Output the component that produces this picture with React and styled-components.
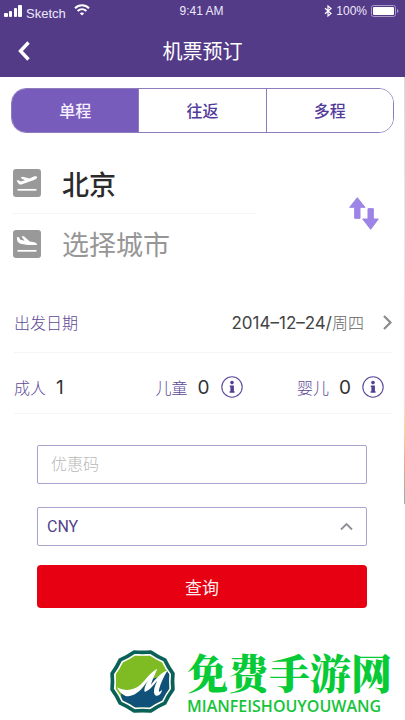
import React, { useState } from 'react';
import styled, { createGlobalStyle } from 'styled-components';

const GlobalStyle = createGlobalStyle`
  * {
    box-sizing: border-box;
  }

  body {
    margin: 0;
    background: #fff;
    color: #333;
    font-family: Inter, "Noto Sans CJK SC", sans-serif;
  }

  button, input, select {
    margin: 0;
    padding: 0;
    border: 0;
    background: none;
    color: inherit;
    font: inherit;
  }

  button {
    cursor: pointer;
  }
`

const Page = styled.div`
  display: flex;
  flex-direction: column;
  min-height: 100vh;
  background: linear-gradient(#b9e2f2 0, #d9eff6 230px, #fbdcdc 300px, #fbdcdc 400px, #f8e08c 430px, #f5a58a 460px, #8fb5a0 504px) right top / 1px 504px no-repeat;
`

const Header = styled.header`
  height: 77px;
  background: #533b88;
  color: #fff;
`

const StatusBar = styled.div`
  display: grid;
  grid-template-columns: 1fr auto 1fr;
  align-items: center;
  height: 22px;
  padding: 0 6px 0 4px;
  color: #eee8fa;
  font-family: "Liberation Sans", Arial, sans-serif;
  font-size: 12px;
`

const StatusGroup = styled.div`
  display: flex;
  align-items: center;
  gap: 4px;
  justify-content: ${props => props.$end ? 'flex-end' : 'flex-start'};
`

const Carrier = styled.span`
  padding: 4px 4px 0 0;
  font-size: 13px;
`

const NavBar = styled.div`
  display: grid;
  grid-template-columns: 48px 1fr 48px;
  align-items: center;
  height: 58px;
`

const BackButton = styled.button`
  display: flex;
  align-items: center;
  justify-content: center;
  height: 44px;
`

const Title = styled.h1`
  margin: 0;
  padding-top: 2px;
  font-size: 20px;
  font-weight: 400;
  line-height: 28px;
  text-align: center;
`

const Tabs = styled.div`
  display: flex;
  height: 45px;
  margin: 11px 11px 0;
  overflow: hidden;
  border: 1px solid #8c7cbd;
  border-radius: 15px;
`

const Tab = styled.button`
  flex: 1;
  padding-bottom: 2px;
  background: ${props => props.$active ? '#785cbb' : '#fff'};
  color: ${props => props.$active ? '#f6efff' : '#523a9c'};
  font-size: 16px;
  font-weight: 500;

  & + & {
    border-left: 1px solid #8c7cbd;
  }
`

const Route = styled.section`
  display: flex;
  align-items: center;
  margin-top: 20px;
  padding: 0 26px 0 12px;
`

const Cities = styled.div`
  flex: 1;
`

const CityButton = styled.button`
  display: flex;
  align-items: center;
  gap: 21px;
  width: 244px;
  height: 60px;
  color: ${props => props.$empty ? '#969696' : '#2b2b2b'};
  font-size: 27px;
  font-weight: ${props => props.$empty ? 400 : 500};
  text-align: left;

  & + & {
    border-top: 1px solid #f5f4f7;
  }
`

const CityIcon = styled.svg`
  width: 28px;
  height: 28px;
  margin-left: 1px;
  border-radius: 3px;
  background: #999;
`

const SwapButton = styled.button`
  display: flex;
`

const Details = styled.section`
  margin: 18px 13px 0 14px;
`

const DateButton = styled.button`
  display: flex;
  align-items: center;
  width: 100%;
  height: 62px;
  padding-top: 1px;
  border-bottom: 1px solid #f5f4f7;
`

const Label = styled.span`
  color: #5d4996;
  font-size: 16px;
  font-weight: 300;
`

const DateText = styled.span`
  margin-left: auto;
  margin-right: 19px;
  color: #444;
  font-size: 17px;
`

const Weekday = styled.span`
  color: #666;
  font-size: 16px;
  font-weight: 300;
`

const Passengers = styled.div`
  display: grid;
  grid-template-columns: 1fr 1fr auto;
  align-items: center;
  height: 61px;
  padding-top: 8px;
  padding-right: 8px;
  border-bottom: 1px solid #f5f4f7;
`

const Passenger = styled.div`
  display: flex;
  align-items: center;
`

const Count = styled.span`
  width: 23px;
  margin-left: 10px;
  font-size: 19px;
`

const InfoButton = styled.button`
  display: flex;
`

const Form = styled.form`
  display: flex;
  flex-direction: column;
  margin: 31px 38px 0 37px;
`

const fieldBox = `
  width: 100%;
  height: 39px;
  border: 1px solid #aaa3cb;
  border-radius: 2px;
`

const CodeInput = styled.input`
  ${fieldBox}
  padding: 0 13px 2px;
  font-size: 16px;

  &::placeholder {
    color: #b8b8b8;
    font-weight: 300;
  }
`

const SelectWrapper = styled.div`
  position: relative;
  margin: 23px 0 19px;
`

const CurrencySelect = styled.select`
  ${fieldBox}
  appearance: none;
  display: block;
  padding: 0 9px;
  color: #54438a;
  font-family: Roboto, sans-serif;
  font-size: 16px;
`

const SelectArrow = styled.svg`
  position: absolute;
  top: 15px;
  right: 14px;
  pointer-events: none;
`

const SubmitButton = styled.button`
  height: 43px;
  border-radius: 4px;
  background: #e60012;
  color: #ffeff0;
  font-size: 17px;
`

const Footer = styled.footer`
  display: flex;
  align-items: center;
  gap: 11px;
  margin-top: auto;
  padding: 0 12px 6px 109px;
`

const Brand = styled.div`
  display: flex;
  flex-direction: column;
  gap: 6px;
  white-space: nowrap;
`

const BrandName = styled.strong`
  color: #06cb36;
  font-family: "Noto Serif CJK SC", "Noto Sans CJK SC", serif;
  font-size: 41px;
  font-weight: 900;
  line-height: 42px;
`

const BrandLatin = styled.span`
  color: #16c43a;
  font-family: "Open Sans", sans-serif;
  font-size: 16px;
  font-weight: 600;
  line-height: 14px;
`

function SignalIcon() {
  return (
    <svg width="18" height="12" viewBox="0 0 18 12" fill="#fff">
      <rect x="0" y="8" width="4" height="4" rx="1" />
      <rect x="5" y="6" width="3" height="6" rx="1" />
      <rect x="10" y="3" width="3" height="9" rx="1" />
      <rect x="14" y="0" width="4" height="12" rx="1" />
    </svg>
  )
}

function WifiIcon() {
  return (
    <svg width="16" height="14" viewBox="0 0 16 14" fill="none" stroke="#fff" strokeWidth="2">
      <path d="M1 4.2C5 0.3 11 0.3 15 4.2" />
      <path d="M3.6 7C6.2 4.6 9.8 4.6 12.4 7" />
      <path d="M8 11.5L5.8 9.2C7 8.1 9 8.1 10.2 9.2Z" fill="#fff" stroke="none" />
    </svg>
  )
}

function BluetoothIcon() {
  return (
    <svg width="8" height="12" viewBox="0 0 8 12" fill="none" stroke="#fff" strokeWidth="1.2">
      <path d="M1 3.3L7 8.6L4 11V1L7 3.4L1 8.7" />
    </svg>
  )
}

function BatteryIcon() {
  return (
    <svg width="28" height="12" viewBox="0 0 28 12">
      <rect x="0.5" y="0.5" width="24" height="11" rx="2" fill="none" stroke="#a99bc9" />
      <rect x="2" y="2" width="21" height="8" rx="1" fill="#fff" />
      <path d="M26 4Q27.5 4.5 27.5 6T26 8Z" fill="#a99bc9" />
    </svg>
  )
}

function TakeoffIcon() {
  return (
    <CityIcon viewBox="0 0 80 80" fill="#fff">
      <path d="M10 33L16 32L22 36L34 32L21 25L28 22L47 27L61 21Q69 19 69 24Q68 28 58 32L24 44Q18 46 15 41Z" />
      <rect x="13" y="57" width="54" height="5" />
    </CityIcon>
  )
}

function LandingIcon() {
  return (
    <CityIcon viewBox="0 0 80 80" fill="#fff">
      <path d="M11 20L17 21L21 28L33 31L24 18L31 18L48 33L61 35Q69 37 69 43H42L21 39Q13 36 12 31Z" />
      <rect x="13" y="57" width="54" height="5" />
    </CityIcon>
  )
}

function InfoIcon() {
  return (
    <svg width="22" height="22" viewBox="0 0 22 22" fill="#523f94">
      <circle cx="11" cy="11" r="10.2" fill="none" stroke="#5c4a99" strokeWidth="1.1" />
      <circle cx="11" cy="6.6" r="1.8" />
      <path d="M8.8 9.4H12.9V15.2H13.6V16.8H8.6V15.2H9.4V10.9H8.8Z" />
    </svg>
  )
}

function SwapIcon() {
  return (
    <svg width="30" height="33" viewBox="0 0 90 99" fill="#9c85e6" stroke="#9c85e6" strokeWidth="3" strokeLinejoin="round">
      <path d="M25 2L48 31H33V64H17V31H2Z" />
      <path d="M65 97L88 66H73V35H57V66H41Z" />
    </svg>
  )
}

// rounded twelve-sided badge, each side slightly pulled in
function badgePath(r) {
  const point = (radius, deg) => {
    const a = deg * Math.PI / 180
    return `${(100 + radius * Math.cos(a)).toFixed(1)} ${(97 + radius * 0.97 * Math.sin(a)).toFixed(1)}`
  }
  let d = `M${point(r, 15)}`
  for (let i = 1; i <= 12; i++) {
    d += `Q${point(r * 0.94, i * 30)} ${point(r, 15 + i * 30)}`
  }
  return d + 'Z'
}

function BrandLogo() {
  return (
    <svg width="67" height="65" viewBox="0 0 200 194" strokeLinejoin="round">
      <clipPath id="badge">
        <path d={badgePath(83)} />
      </clipPath>
      <path d={badgePath(94)} fill="#fff" stroke="#0a6157" strokeWidth="11" />
      <g clipPath="url(#badge)">
        <rect width="200" height="194" fill="#7fbc24" />
        <path d="M36 130L95 122L120 90L145 85L172 64L200 56V194H40Z" fill="#0f5179" />
        <path d="M24 114C48 127 74 124 94 107C110 92 120 72 144 59C137 78 129 92 125 107C139 90 153 72 176 62C163 82 153 105 149 122C149 131 153 128 158 121C157 136 146 143 138 138C130 130 136 112 144 95C130 112 118 126 107 128C103 121 109 107 116 94C100 117 84 138 58 141C44 141 32 130 24 114Z" fill="#fff" />
      </g>
    </svg>
  )
}

const trips = ['单程', '往返', '多程']

const passengers = [
  { id: 'adult', label: '成人', count: 1 },
  { id: 'child', label: '儿童', count: 0, info: true },
  { id: 'infant', label: '婴儿', count: 0, info: true }
]

export default function App() {
  const [trip, setTrip] = useState('单程')
  const [cities, setCities] = useState(['北京', ''])
  const [code, setCode] = useState('')

  const handleSwapClick = () => {
    setCities([cities[1], cities[0]])
  }

  return (
    <Page>
      <GlobalStyle />
      <Header>
        <StatusBar>
          <StatusGroup>
            <SignalIcon />
            <Carrier>Sketch</Carrier>
            <WifiIcon />
          </StatusGroup>
          <span>9:41 AM</span>
          <StatusGroup $end>
            <BluetoothIcon />
            <span>100%</span>
            <BatteryIcon />
          </StatusGroup>
        </StatusBar>
        <NavBar>
          <BackButton aria-label="返回">
            <svg width="12" height="20" viewBox="0 0 12 20" fill="none" stroke="#fff" strokeWidth="3.4">
              <path d="M10.5 1.5L2.5 10L10.5 18.5" />
            </svg>
          </BackButton>
          <Title>机票预订</Title>
        </NavBar>
      </Header>

      <Tabs>
        {trips.map(name => (
          <Tab key={name} $active={name === trip} aria-pressed={name === trip} onClick={() => setTrip(name)}>
            {name}
          </Tab>
        ))}
      </Tabs>

      <Route>
        <Cities>
          <CityButton $empty={!cities[0]}>
            <TakeoffIcon />
            {cities[0] || '选择城市'}
          </CityButton>
          <CityButton $empty={!cities[1]}>
            <LandingIcon />
            {cities[1] || '选择城市'}
          </CityButton>
        </Cities>
        <SwapButton aria-label="交换城市" onClick={handleSwapClick}>
          <SwapIcon />
        </SwapButton>
      </Route>

      <Details>
        <DateButton>
          <Label>出发日期</Label>
          <DateText>2014–12–24/<Weekday>周四</Weekday></DateText>
          <svg width="9" height="15" viewBox="0 0 9 15" fill="none" stroke="#8a8a8a" strokeWidth="2.2">
            <path d="M1 1L7.5 7.5L1 14" />
          </svg>
        </DateButton>
        <Passengers>
          {passengers.map(item => (
            <Passenger key={item.id}>
              <Label>{item.label}</Label>
              <Count>{item.count}</Count>
              {item.info && (
                <InfoButton aria-label={item.label + '说明'}>
                  <InfoIcon />
                </InfoButton>
              )}
            </Passenger>
          ))}
        </Passengers>
      </Details>

      <Form onSubmit={e => e.preventDefault()}>
        <CodeInput
          aria-label="优惠码"
          placeholder="优惠码"
          value={code}
          onChange={e => setCode(e.target.value)}
        />
        <SelectWrapper>
          <CurrencySelect aria-label="货币" defaultValue="CNY">
            <option>CNY</option>
            <option>USD</option>
          </CurrencySelect>
          <SelectArrow width="13" height="9" viewBox="0 0 13 9" fill="none" stroke="#8e8e96" strokeWidth="1.8">
            <path d="M1 7.5L6.5 2L12 7.5" />
          </SelectArrow>
        </SelectWrapper>
        <SubmitButton type="submit">查询</SubmitButton>
      </Form>

      <Footer>
        <BrandLogo />
        <Brand>
          <BrandName>免费手游网</BrandName>
          <BrandLatin>MIANFEISHOUYOUWANG</BrandLatin>
        </Brand>
      </Footer>
    </Page>
  )
}
